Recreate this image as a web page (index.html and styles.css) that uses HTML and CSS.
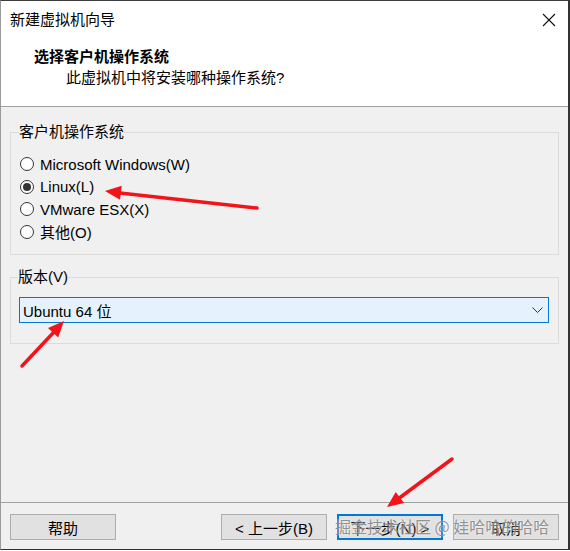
FILE: index.html
```html
<!DOCTYPE html>
<html lang="zh-CN">
<head>
    <meta charset="UTF-8">
    <meta name="viewport" content="width=device-width, initial-scale=1.0">
    <title>新建虚拟机向导</title>
    <link rel="stylesheet" href="styles.css">
</head>
<body>
    <div class="window">
        <div class="titlebar">
            <span class="title">新建虚拟机向导</span>
            <svg class="close" width="14" height="14" viewBox="0 0 14 14">
                <path d="M1 1 L13 13 M13 1 L1 13" stroke="#111" stroke-width="1.1" fill="none"/>
            </svg>
        </div>

        <div class="header">
            <div class="heading">选择客户机操作系统</div>
            <div class="subheading">此虚拟机中将安装哪种操作系统?</div>
        </div>

        <div class="content">
            <fieldset class="group">
                <legend>客户机操作系统</legend>
                <label class="radio-row"><span class="radio"></span>Microsoft Windows(W)</label>
                <label class="radio-row"><span class="radio checked"></span>Linux(L)</label>
                <label class="radio-row"><span class="radio"></span>VMware ESX(X)</label>
                <label class="radio-row"><span class="radio"></span>其他(O)</label>
            </fieldset>

            <fieldset class="group version">
                <legend>版本(V)</legend>
                <div class="select">
                    <span>Ubuntu 64 位</span>
                    <svg width="11" height="6" viewBox="0 0 11 6">
                        <path d="M0.5 0.5 L5.5 5.5 L10.5 0.5" stroke="#333" stroke-width="1" fill="none"/>
                    </svg>
                </div>
            </fieldset>

            <div class="spacer"></div>

            <div class="footer">
                <button class="btn">帮助</button>
                <div class="nav">
                    <button class="btn">&lt; 上一步(B)</button>
                    <button class="btn primary">下一步(N) &gt;</button>
                    <button class="btn">取消</button>
                </div>
            </div>
        </div>
    </div>

    <div class="watermark">掘金技术社区 @ 娃哈哈的哈哈</div>

    <!-- annotation arrows drawn over the dialog -->
    <svg class="arrows" width="570" height="551" viewBox="0 0 570 551">
        <g stroke="#f2141a" stroke-width="3.5" stroke-linecap="round" fill="#f2141a">
            <line x1="257" y1="208" x2="120" y2="193"/>
            <polygon points="105,191 120.1,199.8 121.7,185.8" stroke="none"/>
            <line x1="22" y1="366" x2="54" y2="332"/>
            <polygon points="64,321 58.2,337.5 48,327.9" stroke="none"/>
            <line x1="452" y1="459" x2="400" y2="497.5"/>
            <polygon points="387,507 404.1,503.1 395.7,491.9" stroke="none"/>
        </g>
    </svg>
</body>
</html>
```

FILE: styles.css
```css
body {
    margin: 0;
    font-family: "Liberation Sans", "Noto Sans CJK SC", sans-serif;
    font-size: 15px;
    color: #000;
    background-color: #fff;
}

.window {
    width: 570px;
    height: 550px;
    box-sizing: border-box;
    border-top: 1px solid #3c3c3c;
    border-left: 1px solid #9a9a9a;
    border-right: 2px solid #333;
    border-bottom: 1px solid #333;
    display: flex;
    flex-direction: column;
    background-color: #fff;
}

.titlebar {
    height: 37px;
    display: flex;
    align-items: center;
    justify-content: space-between;
    padding: 0 12px 0 9px;
}

.title {
    line-height: 20px;
}

.close {
    display: block;
}

/* white wizard header */
.header {
    padding: 9px 0 18px 0;
    border-bottom: 1px solid #a0a0a0;
}

.heading {
    font-weight: bold;
    line-height: 20px;
    padding-left: 33px;
}

.subheading {
    line-height: 20px;
    padding-left: 65px;
    margin-top: 1px;
}

.content {
    flex: 1;
    background-color: #f0f0f0;
    display: flex;
    flex-direction: column;
}

.group {
    margin: 15px 9px 0 9px;
    padding: 11px 9px 11px 9px;
    border: 1px solid #dcdcdc;
    min-width: 0;
}

.group legend {
    padding: 0;
    margin-left: -1px;
    line-height: 20px;
}

.radio-row {
    display: flex;
    align-items: center;
    gap: 6px;
    height: 22.5px;
}

.radio {
    width: 14px;
    height: 14px;
    box-sizing: border-box;
    border: 1px solid #333;
    border-radius: 50%;
    background-color: #fff;
    display: flex;
    align-items: center;
    justify-content: center;
}

.radio.checked::after {
    content: "";
    width: 8px;
    height: 8px;
    border-radius: 50%;
    background-color: #333;
}

.version {
    margin-top: 12px;
    padding: 10px 9px 20px 8px;
}

.select {
    height: 26px;
    box-sizing: border-box;
    border: 1px solid #0078d7;
    background-color: #e5f1fb;
    display: flex;
    align-items: center;
    justify-content: space-between;
    padding: 0 5px 0 3px;
}

.spacer {
    flex: 1;
}

.footer {
    border-top: 1px solid #a0a0a0;
    padding: 11px 9px 9px 9px;
    display: flex;
    justify-content: space-between;
}

.nav {
    display: flex;
    gap: 10px;
}

.btn {
    width: 106px;
    height: 26px;
    font-family: inherit;
    font-size: 15px;
    color: #000;
    background-color: #e1e1e1;
    border: 1px solid #adadad;
    padding: 0;
}

.btn.primary {
    border: 2px solid #0078d7;
}

.watermark {
    position: absolute;
    left: 335px;
    top: 516px;
    font-family: "Noto Sans CJK SC", sans-serif;
    font-size: 16px;
    line-height: 20px;
    color: rgba(120, 120, 120, 0.8);
    text-shadow: 0 0 2px rgba(255, 255, 255, 0.9);
    white-space: nowrap;
}

.arrows {
    position: absolute;
    left: 0;
    top: 0;
    pointer-events: none;
}
```
